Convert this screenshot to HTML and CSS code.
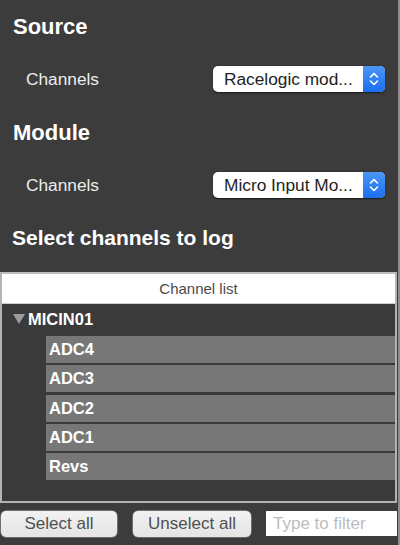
FILE: index.html
```html
<!DOCTYPE html>
<html lang="en">
<head>
<meta charset="utf-8">
<title>Channels</title>
<link rel="stylesheet" href="styles.css">
</head>
<body>
<div class="window">
  <div class="panel">
    <h2 class="section">Source</h2>
    <div class="field">
      <span class="label">Channels</span>
      <div class="popup">
        <span class="popup-text">Racelogic mod...</span>
        <span class="popup-arrows">
          <svg width="22" height="26" viewBox="0 0 22 26"><polyline points="7.5,11 11,7.5 14.5,11" fill="none" stroke="#fff" stroke-width="1.6" stroke-linecap="round" stroke-linejoin="round"/><polyline points="7.5,15 11,18.5 14.5,15" fill="none" stroke="#fff" stroke-width="1.6" stroke-linecap="round" stroke-linejoin="round"/></svg>
        </span>
      </div>
    </div>
    <h2 class="section module">Module</h2>
    <div class="field">
      <span class="label">Channels</span>
      <div class="popup">
        <span class="popup-text">Micro Input Mo...</span>
        <span class="popup-arrows">
          <svg width="22" height="26" viewBox="0 0 22 26"><polyline points="7.5,11 11,7.5 14.5,11" fill="none" stroke="#fff" stroke-width="1.6" stroke-linecap="round" stroke-linejoin="round"/><polyline points="7.5,15 11,18.5 14.5,15" fill="none" stroke="#fff" stroke-width="1.6" stroke-linecap="round" stroke-linejoin="round"/></svg>
        </span>
      </div>
    </div>
    <h2 class="section select">Select channels to log</h2>
  </div>

  <div class="list">
    <div class="list-header">Channel list</div>
    <div class="list-body">
      <div class="tree-parent">
        <svg class="disclosure" width="12" height="10" viewBox="0 0 12 10"><polygon points="0,0 12,0 6,10" fill="#9c9c9c"/></svg>
        <span>MICIN01</span>
      </div>
      <div class="tree-children">
        <div class="item">ADC4</div>
        <div class="item">ADC3</div>
        <div class="item">ADC2</div>
        <div class="item">ADC1</div>
        <div class="item">Revs</div>
      </div>
    </div>
  </div>

  <div class="footer">
    <button class="btn btn-select">Select all</button>
    <button class="btn btn-unselect">Unselect all</button>
    <input class="filter" type="text" placeholder="Type to filter">
  </div>
</div>
</body>
</html>
```
FILE: styles.css
```css
html, body {
  margin: 0;
  padding: 0;
}
body {
  width: 400px;
  height: 545px;
  background: #3c3c3c;
  font-family: "Liberation Sans", Arial, Helvetica, sans-serif;
  overflow: hidden;
}
.window {
  width: 398px;
  height: 545px;
  border-right: 2px solid #8e8e8e;
  background: #3c3c3c;
  display: flex;
  flex-direction: column;
}
.panel {
  padding-top: 14px;
  display: flex;
  flex-direction: column;
}
.section {
  margin: 0 0 0 13px;
  font-size: 22px;
  line-height: 26px;
  height: 26px;
  font-weight: 700;
  color: #ffffff;
}
.section.module {
  margin-top: 28px;
}
.section.select {
  margin-top: 27px;
  font-size: 21px;
  margin-left: 12px;
}
.field {
  margin-top: 26px;
  height: 26px;
  display: flex;
  align-items: center;
  justify-content: space-between;
  padding-left: 26px;
  padding-right: 13px;
}
.label {
  font-size: 17.3px;
  color: #ececec;
}
.popup {
  width: 172px;
  height: 26px;
  display: flex;
  background: #ffffff;
  border-radius: 5px;
  box-shadow: 0 0.5px 1.5px rgba(0, 0, 0, 0.6);
  overflow: hidden;
}
.popup-text {
  flex: 1;
  font-size: 17.3px;
  line-height: 26px;
  color: #1e1e1e;
  padding-left: 11px;
  white-space: nowrap;
  overflow: hidden;
}
.popup-arrows {
  width: 22px;
  height: 26px;
  display: flex;
  background: linear-gradient(#4a96f7, #1a6ff0);
}
.list {
  margin-top: 21px;
  margin-right: 1px;
  border: 2px solid #b4b4b4;
  border-top-color: #bdbdbd;
  display: flex;
  flex-direction: column;
}
.list-header {
  height: 29px;
  border-bottom: 1px solid #cfcfcf;
  background: #ffffff;
  color: #4a4a4a;
  font-size: 15px;
  line-height: 30px;
  text-align: center;
}
.list-body {
  height: 197px;
  background: #3a3a3a;
  display: flex;
  flex-direction: column;
}
.tree-parent {
  height: 30px;
  display: flex;
  align-items: center;
  padding-left: 11px;
  gap: 3px;
  color: #ffffff;
  font-size: 16.5px;
  font-weight: 700;
}
.disclosure {
  display: block;
}
.tree-children {
  margin-top: 2px;
  margin-left: 44px;
  display: flex;
  flex-direction: column;
  gap: 2.3px;
}
.item {
  height: 27px;
  line-height: 27px;
  background: #777777;
  color: #ffffff;
  font-size: 16.5px;
  font-weight: 700;
  padding-left: 3px;
}
.footer {
  margin-top: 8px;
  padding-left: 1px;
  display: flex;
  align-items: flex-start;
}
.btn {
  height: 26px;
  padding: 0;
  border: none;
  border-radius: 5px;
  background: linear-gradient(#f1f1f1, #e4e4e4);
  box-shadow: 0 0 0 0.5px #a9a9a9, 0 1px 1px rgba(0, 0, 0, 0.35);
  color: #505050;
  font-family: "Liberation Sans", Arial, Helvetica, sans-serif;
  font-size: 17px;
}
.btn-select {
  width: 116px;
}
.btn-unselect {
  width: 118px;
  margin-left: 16px;
}
.filter {
  margin-left: 15px;
  width: 131px;
  height: 25px;
  box-sizing: border-box;
  border: none;
  outline: none;
  background: #ffffff;
  padding: 0 0 0 7px;
  font-family: "Liberation Sans", Arial, Helvetica, sans-serif;
  font-size: 17px;
  color: #222;
}
.filter::placeholder {
  color: #bdbdbd;
}
```
